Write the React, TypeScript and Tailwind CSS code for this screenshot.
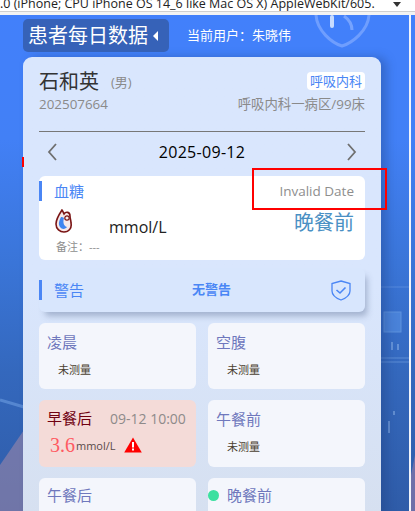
import React from "react";

const FONT = { fontFamily: '"Open Sans","Noto Sans CJK SC",sans-serif' };

function Bg() {
  return (
    <svg className="absolute inset-0" width="415" height="496" viewBox="0 0 415 496" aria-hidden="true">
      <defs>
        <linearGradient id="bg" x1="0" y1="0" x2="0" y2="1">
          <stop offset="0" stopColor="#4280fb" />
          <stop offset="0.25" stopColor="#4280f6" />
          <stop offset="0.5" stopColor="#3a75d8" />
          <stop offset="0.72" stopColor="#3468bd" />
          <stop offset="1" stopColor="#2f5ca8" />
        </linearGradient>
      </defs>
      <rect width="415" height="496" fill="url(#bg)" />
      <polygon points="0,496 0,450 24,415 24,496" fill="#a58aa8" opacity="0.55" />
      <path d="M0 385 L24 392" stroke="#7fb0ee" strokeWidth="3" opacity="0.45" />
      <path d="M381 343 H409 M381 347 H409" stroke="#8ab6f0" strokeWidth="1" opacity="0.45" />
      <path d="M381 272 H409" stroke="#8ab6f0" strokeWidth="1" opacity="0.35" />
      <rect x="384" y="297" width="17" height="20" fill="#5a94e6" stroke="#7fb0ee" opacity="0.55" />
      <path d="M392 335 v-8 M398 335 v-6 M389 418 v-12 M394 400 v-4" stroke="#9cc0f0" strokeWidth="2" opacity="0.45" />
      <path d="M411 460 L415 440 V496 H411 Z" fill="#8a78a8" opacity="0.7" />
      <g fill="none">
        <path d="M316 0 C317 16 332 28 342 31 C352 28 368 16 369 0" stroke="#7fa8ff" strokeWidth="3" opacity="0.75" />
        <path d="M332 2 V11" stroke="#d7e6ff" strokeWidth="4" strokeLinecap="round" opacity="0.9" />
        <path d="M344 1 C351 6 352 12 352 15" stroke="#8db2ff" strokeWidth="3" opacity="0.7" />
      </g>
    </svg>
  );
}

function Bar({ h }: { h: string }) {
  return <span className={`w-[3px] bg-[#4a86f5] ${h}`} />;
}

function Chevron({ d }: { d: string }) {
  return (
    <svg width="12" height="18" viewBox="0 0 12 18" fill="none" stroke="#6f6f6f" strokeWidth="1.8">
      <path d={d} />
    </svg>
  );
}

function Slot({ title }: { title: string }) {
  return (
    <div className="h-full rounded-md bg-[#f4f6fc] pl-[8px] pt-[8px]">
      <div className="text-[15px] leading-[22px] text-[#6f78bd]">{title}</div>
      <div className="mt-[9px] pl-[11px] text-[11px] leading-[16px] text-[#4a3f30]">未测量</div>
    </div>
  );
}

export default function App() {
  return (
    <div className="relative flex h-[511px] w-[415px] flex-col overflow-hidden bg-white" style={FONT}>
      <div className="relative z-10 h-[15px] shrink-0 overflow-hidden bg-[#f3f3f3]">
        <div className="flex h-[12px] items-end overflow-hidden border-b border-[#d0d0d0] bg-white">
          <span className="mb-[1px] whitespace-nowrap text-[12.5px] leading-[13px] text-[#222]" style={{ fontFamily: '"Open Sans",sans-serif' }}>
            .0 (iPhone; CPU iPhone OS 14_6 like Mac OS X) AppleWebKit/605.
          </span>
        </div>
        <span className="absolute left-[393px] top-[2px] h-0 w-0 border-x-[4px] border-t-[5px] border-x-transparent border-t-[#333]" />
      </div>

      <div className="relative flex min-h-0 flex-1">
        <Bg />
        <main className="relative w-[409px] shrink-0 pl-[23px]">
          <span className="absolute left-[22px] top-[142px] h-[10px] w-[2px] bg-[#ff0000]" />

          <header className="mt-[4px] flex h-[33px] items-center">
            <div className="flex h-full w-[146px] items-center rounded-[5px] bg-[#3662b8] pl-[5px] text-[20px] text-white">
              患者每日数据
              <span className="ml-[5px] h-0 w-0 border-y-[5px] border-r-[5px] border-y-transparent border-r-white" />
            </div>
            <div className="ml-[18px] text-[13px] text-white">{"当前用户\uFF1A朱晓伟"}</div>
          </header>

          <section className="mt-[5px] h-[460px] w-[358px] rounded-t-[9px] bg-gradient-to-b from-[#d9e6fd] from-50% to-[#d6e0f0] px-[16px] pt-[11px] shadow-[6px_0_10px_rgba(30,60,120,0.35)]">
            <div className="flex h-[25px] items-center justify-between">
              <div className="flex items-center">
                <span className="mt-[1px] text-[20px] leading-[25px] text-[#333]">石和英</span>
                <span className="ml-[12px] mt-[4px] text-[13px] text-[#8a8a8a]">(男)</span>
              </div>
              <span className="rounded bg-white px-[3px] text-[13px] leading-[18px] text-[#4a86f5]">呼吸内科</span>
            </div>
            <div className="mt-[3px] flex h-[16px] items-center justify-between text-[13.4px] text-[#8a8a8a]">
              <span>202507664</span>
              <span>呼吸内科一病区/99床</span>
            </div>

            <div className="mt-[19px] h-px bg-[#777]" />

            <div className="flex h-[39px] items-center justify-between px-[8px]">
              <Chevron d="M9 1 L2 9 L9 17" />
              <span className="text-[16px] tracking-[0.3px] text-black">2025-09-12</span>
              <Chevron d="M3 1 L10 9 L3 17" />
            </div>

            <div className="mt-[5px] h-[84px] rounded-md bg-white">
              <div className="flex h-[20px] items-center pt-[10px]">
                <Bar h="h-[20px]" />
                <span className="ml-[12px] flex-1 text-[15px] text-[#4a86f5]">血糖</span>
                <span className="pr-[11px] text-[13.5px] text-[#8e8e8e]">Invalid Date</span>
              </div>
              <div className="mt-[13px] flex h-[28px] items-center pl-[16px] pr-[11px]">
                <svg width="18" height="24" viewBox="0 0 18 24" className="-mt-[4px]">
                  <path d="M7 1 C3 7 1 11 1 15 C1 20 5 23 9 23 C14 23 17 19 16 14 C16 11 15 10 15 7 C15 3 11 2 9 5 C8 3 8 2 7 1Z" fill="#f7e9e9" stroke="#7a1515" strokeWidth="1.6" />
                  <path d="M6 8 C4 12 3 15 5 18 C7 21 11 20 12 18 C8 17 8 12 9 9 C8 8 7 8 6 8Z" fill="#3f86f0" />
                  <circle cx="12" cy="9" r="2.2" fill="none" stroke="#7a1515" strokeWidth="1.2" />
                </svg>
                <span className="ml-[36px] mt-[7px] flex-1 text-[16px] text-[#222]">mmol/L</span>
                <span className="text-[20px] text-[#4a90c4]">晚餐前</span>
              </div>
              <div className="mt-[3px] pl-[17px] text-[11px] leading-[14px] text-[#8e8e8e]">{"备注\uFF1A---"}</div>
            </div>

            <div className="mt-[8px] flex h-[44px] items-center rounded-md bg-[#d8e6fd] pr-[14px] shadow-[4px_6px_6px_-2px_rgba(60,80,120,0.35)]">
              <Bar h="h-[20px]" />
              <span className="ml-[12px] w-[108px] text-[15px] text-[#4a86f5]">警告</span>
              <span className="flex-1 pl-[30px] text-[13px] font-bold text-[#4a86f5]">无警告</span>
              <svg width="20" height="21" viewBox="0 0 20 21" fill="none" stroke="#4a86f5" strokeWidth="1.3">
                <path d="M10 1 L19 3.5 V11 C19 16 14 18.5 10 20 C6 18.5 1 16 1 11 V3.5 Z" />
                <path d="M5.5 10 L9 13 L14.5 7.5" strokeWidth="1.6" />
              </svg>
            </div>

            <div className="mt-[11px] grid grid-cols-2 gap-x-[12px] gap-y-[11px]" style={{ gridTemplateRows: "66px 67px 66px" }}>
              <Slot title="凌晨" />
              <Slot title="空腹" />
              <div className="h-full rounded-md bg-[#f4dbd8] pl-[8px] pt-[7px]">
                <div className="flex h-[22px] items-center">
                  <span className="text-[15px] text-[#6f0010]">早餐后</span>
                  <span className="ml-[18px] text-[14px] text-[#8e8a8a]">09-12 10:00</span>
                </div>
                <div className="mt-[3px] flex items-center pl-[3px]">
                  <span className="text-[20px] leading-[26px] text-[#ff5a62]" style={{ fontFamily: '"Liberation Serif",serif' }}>3.6</span>
                  <span className="ml-px mt-[3px] text-[11px] text-[#5a4a4a]">mmol/L</span>
                  <svg width="18" height="16" viewBox="0 0 18 16" className="ml-[8px]">
                    <path d="M9 0.5 L17.8 15.5 H0.2 Z" fill="#ff0000" />
                    <rect x="8" y="5" width="2" height="5.5" fill="#fff" />
                    <rect x="8" y="11.5" width="2" height="2" fill="#fff" />
                  </svg>
                </div>
              </div>
              <Slot title="午餐前" />
              <div className="h-full rounded-md bg-[#f4f6fc] pl-[8px] pt-[6px]">
                <div className="text-[15px] leading-[22px] text-[#6f78bd]">午餐后</div>
              </div>
              <div className="relative h-full rounded-md bg-[#f4f6fc] pl-[19px] pt-[6px]">
                <span className="absolute left-0 top-[12px] h-[11px] w-[11px] rounded-full bg-[#3de0a0]" />
                <div className="text-[15px] leading-[22px] text-[#6f78bd]">晚餐前</div>
              </div>
            </div>
          </section>
        </main>
        <div className="relative w-[2px] shrink-0 bg-[#f2f4fa]" />
      </div>

      <div className="absolute left-[252px] top-[168px] z-20 h-[42px] w-[135px] border-2 border-[#ff0000]" />
    </div>
  );
}
